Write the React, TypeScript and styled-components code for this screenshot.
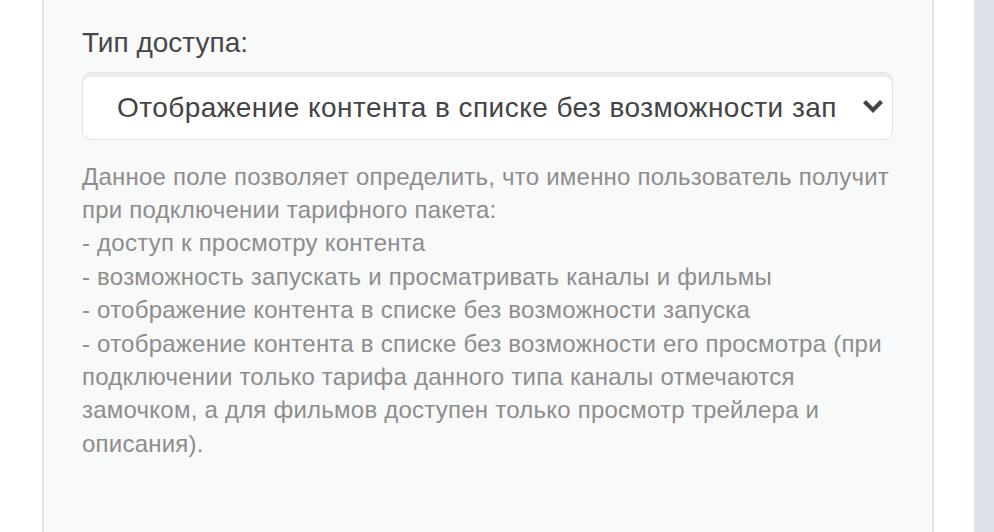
import React from "react";
import styled, { createGlobalStyle } from "styled-components";

const GlobalStyle = createGlobalStyle`
  html, body {
    margin: 0;
    padding: 0;
    background: #fff;
    font-family: "Liberation Sans", Arial, sans-serif;
  }
  * {
    box-sizing: border-box;
  }
`;

const Page = styled.div`
  display: flex;
  height: 532px;
  overflow: hidden;
  padding-left: 42px;
`;

const Panel = styled.div`
  width: 892px;
  flex-shrink: 0;
  background: #f8f9f9;
  border-left: 2px solid #e1e5eb;
  border-right: 2px solid #e1e5eb;
  padding: 26px 39px 0 38px;
`;

const Gutter = styled.div`
  width: 40px;
  flex-shrink: 0;
  background: #fff;
`;

const SideStrip = styled.div`
  flex: 1;
  background: #dde1e9;
`;

const Label = styled.label`
  display: block;
  font-size: 28px;
  line-height: 33.6px;
  color: #474747;
  margin-bottom: 12px;
`;

const SelectBox = styled.div`
  position: relative;
  height: 68px;
  border: 1px solid #e3e3e3;
  border-radius: 9px;
  background: #fff;
  box-shadow: inset 0 4px 0 #ececec;
  display: flex;
  align-items: center;
  padding: 4px 50px 0 34px;
  font-size: 28px;
  letter-spacing: 0.44px;
  color: #444;
  white-space: nowrap;
`;

const SelectText = styled.span`
  overflow: hidden;
`;

const Chevron = styled.svg`
  position: absolute;
  right: 7px;
  top: 27px;
`;

const Help = styled.div`
  margin-top: 20px;
  font-size: 24px;
  letter-spacing: 0.23px;
  line-height: 33.4px;
  color: #8d8d8d;
`;

const lines = [
  "Данное поле позволяет определить, что именно пользователь получит",
  "при подключении тарифного пакета:",
  "- доступ к просмотру контента",
  "- возможность запускать и просматривать каналы и фильмы",
  "- отображение контента в списке без возможности запуска",
  "- отображение контента в списке без возможности его просмотра (при",
  "подключении только тарифа данного типа каналы отмечаются",
  "замочком, а для фильмов доступен только просмотр трейлера и",
  "описания).",
];

const App = () => {
  return (
    <>
      <GlobalStyle />
      <Page>
        <Panel>
          <Label>Тип доступа:</Label>
          <SelectBox>
            <SelectText>Отображение контента в списке без возможности зап</SelectText>
            <Chevron width="24" height="16" viewBox="0 0 24 16">
              <path d="M5 3 L12 10 L19 3" fill="none" stroke="#444" strokeWidth="4.2" strokeLinecap="square" strokeLinejoin="miter" />
            </Chevron>
          </SelectBox>
          <Help>
            {lines.map((l, i) => (
              <div key={i}>{l}</div>
            ))}
          </Help>
        </Panel>
        <Gutter />
        <SideStrip />
      </Page>
    </>
  );
};

export default App;
